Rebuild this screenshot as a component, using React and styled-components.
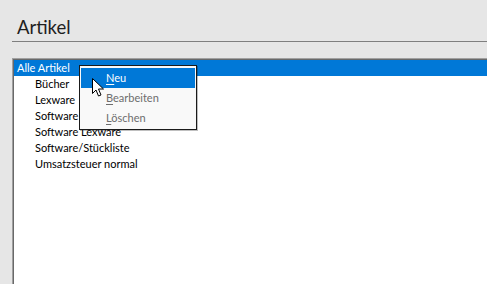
import React from "react";
import styled, { createGlobalStyle } from "styled-components";

const Global = createGlobalStyle`
  html, body { margin: 0; padding: 0; }
  body {
    background: #e6e6e6;
    font-family: Lato, "Noto Sans", sans-serif;
    overflow: hidden;
  }
`;

const Page = styled.div`
  position: relative;
  width: 487px;
  height: 284px;
  display: flex;
  flex-direction: column;
  overflow: hidden;
`;

const Title = styled.h1`
  margin: 0;
  padding: 15px 0 0 17px;
  height: 26px;
  font-size: 18.5px;
  line-height: 24px;
  font-weight: 400;
  color: #1e1e1e;
`;

const Divider = styled.div`
  margin-left: 12px;
  height: 1px;
  background: #7f7f7f;
`;

const ListBox = styled.div`
  margin: 16px -4px 0 12px;
  flex: 1;
  background: #ffffff;
  border-left: 1px solid #a0a0a0;
  border-top: 1px solid #a0a0a0;
  box-shadow: inset 1px 1px 0 #696969;
  padding: 1px 0 0 1px;
`;

const Row = styled.div`
  height: 16px;
  line-height: 16px;
  font-size: 11px;
  padding-left: ${(p) => (p.$child ? 21 : 3)}px;
  color: ${(p) => (p.$selected ? "#ffffff" : "#000000")};
  background: ${(p) => (p.$selected ? "#0078d7" : "transparent")};
  white-space: nowrap;
`;

const Menu = styled.div`
  position: absolute;
  left: 79px;
  top: 65px;
  width: 114px;
  padding: 2px 1px 1px 1px;
  background: #f9f9f9;
  border: 1px solid #1a1a1a;
  box-shadow: 1px 1px 0 rgba(0,0,0,0.25);
`;

const MenuItem = styled.div`
  height: 20px;
  line-height: 20px;
  padding-left: 25px;
  font-size: 11px;
  color: ${(p) => (p.$active ? "#ffffff" : p.$disabled ? "#6d6d6d" : "#000")};
  background: ${(p) => (p.$active ? "#0078d7" : "transparent")};
  u { text-underline-offset: 2px; }
`;

const Cursor = styled.svg`
  position: absolute;
  left: 91px;
  top: 77px;
`;

const items = ["Bücher", "Lexware", "Software", "Software Lexware", "Software/Stückliste", "Umsatzsteuer normal"];

export default function App() {
  return (
    <Page>
      <Global />
      <Title>Artikel</Title>
      <Divider />
      <ListBox>
        <Row $selected>Alle Artikel</Row>
        {items.map((t) => (
          <Row key={t} $child>{t}</Row>
        ))}
      </ListBox>
      <Menu>
        <MenuItem $active><u>N</u>eu</MenuItem>
        <MenuItem $disabled><u>B</u>earbeiten</MenuItem>
        <MenuItem $disabled><u>L</u>öschen</MenuItem>
      </Menu>
      <Cursor width="14" height="21" viewBox="0 0 14 21">
        <path d="M1.5 1.5 L1.5 16.5 L5 13 L7.5 19 L10 18 L7.5 12 L12.5 12 Z" fill="#ffffff" stroke="#000000" strokeWidth="1" strokeLinejoin="miter" />
      </Cursor>
    </Page>
  );
}
